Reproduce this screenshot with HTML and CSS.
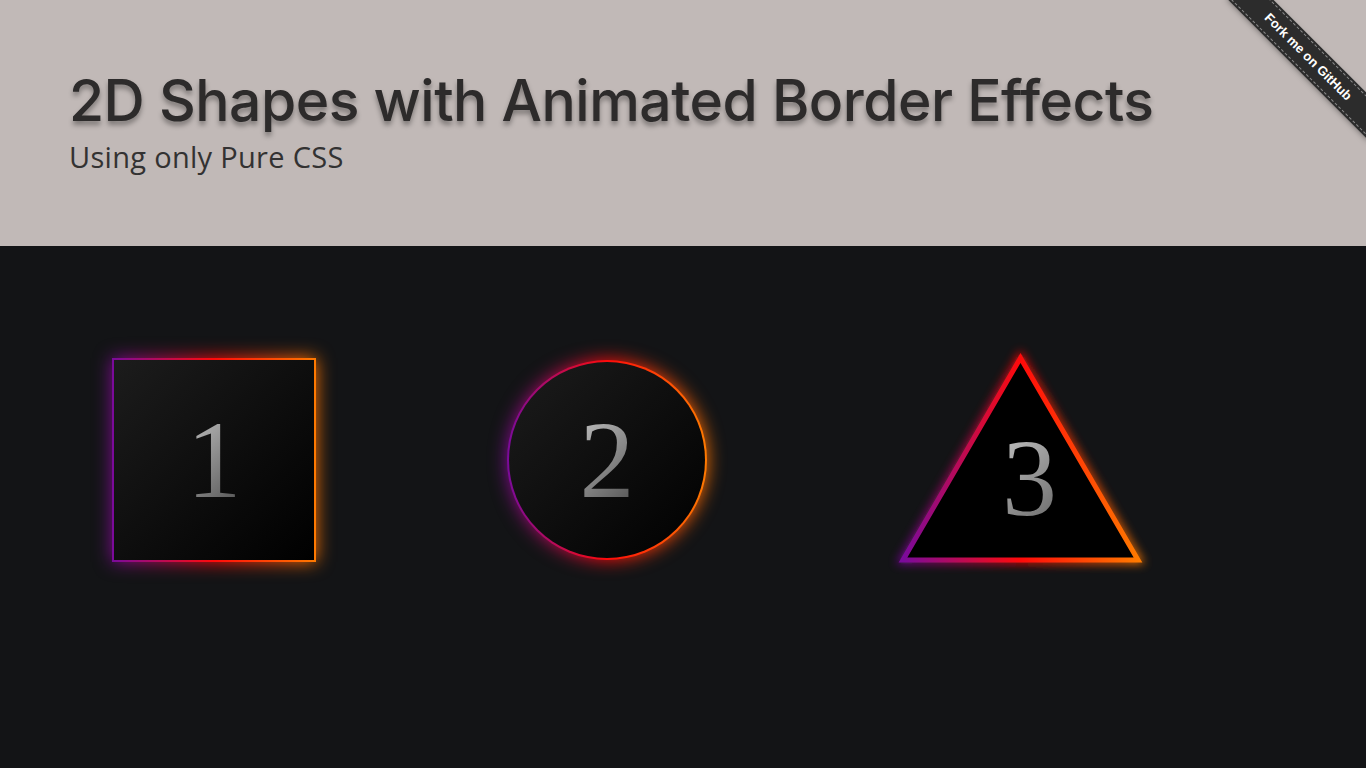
FILE: index.html
```html
<!DOCTYPE html>
<html>
<head>
<meta charset="utf-8">
<link rel="stylesheet" href="styles.css">
</head>
<body>
<header class="hero">
  <h1 class="title">2D Shapes with Animated Border Effects</h1>
  <p class="subtitle">Using only Pure CSS</p>
  <div class="ribbon"><a class="ribbon-link" href="#">Fork me on GitHub</a></div>
</header>
<main class="stage">
  <div class="shape square">
    <div class="glow"></div>
    <div class="face"><span class="num">1</span></div>
  </div>
  <div class="shape circle">
    <div class="glow"></div>
    <div class="face"><span class="num">2</span></div>
  </div>
  <div class="shape triangle">
    <svg class="tri-svg" width="270" height="235" viewBox="0 0 270 235">
      <defs>
        <linearGradient id="tg" x1="0" y1="0" x2="1" y2="0">
          <stop offset="0" stop-color="#7a0a9c"/>
          <stop offset="0.5" stop-color="#ff0a0a"/>
          <stop offset="1" stop-color="#ff7a00"/>
        </linearGradient>
        <filter id="blur" x="-20%" y="-20%" width="140%" height="140%">
          <feGaussianBlur stdDeviation="5"/>
        </filter>
      </defs>
      <polygon points="135.5,18 18,220 253,220" fill="none" stroke="url(#tg)" stroke-width="8" filter="url(#blur)" opacity="0.85"/>
      <polygon points="135.5,18 18,220 253,220" fill="#000" stroke="url(#tg)" stroke-width="5" stroke-linejoin="miter"/>
    </svg>
    <span class="num tri-num">3</span>
  </div>
</main>
</body>
</html>
```
FILE: styles.css
```css
html, body {
  margin: 0;
  padding: 0;
}
body {
  background: #131416;
  height: 768px;
  overflow: hidden;
}
.hero {
  position: relative;
  height: 246px;
  background: #c1b9b7;
  padding: 68px 0 0 69px;
  box-sizing: border-box;
}
.title {
  margin: 0;
  font-family: "Inter", "DejaVu Sans", sans-serif;
  font-weight: 500;
  font-size: 57px;
  line-height: 66px;
  letter-spacing: -0.5px;
  color: #2d2b2b;
  text-shadow: 0 4px 5px rgba(0, 0, 0, 0.35);
}
.subtitle {
  margin: 6px 0 0 0;
  font-family: "Open Sans", "DejaVu Sans", sans-serif;
  font-size: 29px;
  line-height: 34px;
  letter-spacing: 0.3px;
  color: #333232;
}
.ribbon {
  position: absolute;
  top: 0;
  right: 0;
  width: 150px;
  height: 150px;
  overflow: hidden;
}
.ribbon-link {
  position: absolute;
  left: -8px;
  top: 43px;
  width: 200px;
  height: 28px;
  line-height: 22px;
  box-sizing: border-box;
  padding: 2px 0;
  background: #2c2c2c;
  border-top: 1px dashed rgba(255,255,255,0.45);
  border-bottom: 1px dashed rgba(255,255,255,0.45);
  box-shadow: 0 0 0 2px #2c2c2c, 2px 2px 6px rgba(0,0,0,0.5);
  color: #fff;
  text-align: center;
  text-decoration: none;
  font-family: "Liberation Sans", Arial, sans-serif;
  font-weight: bold;
  font-size: 13px;
  transform: rotate(45deg);
}
.stage {
  display: flex;
  align-items: flex-start;
  padding: 112px 0 0 112px;
}
.shape {
  position: relative;
  width: 204px;
  height: 204px;
  flex: none;
}
.glow {
  position: absolute;
  inset: 0;
  background: linear-gradient(90deg, #7a0a9c 0%, #ff0a0a 50%, #ff7a00 100%);
  filter: blur(9px);
  opacity: 1;
}
.face {
  position: relative;
  box-sizing: border-box;
  width: 100%;
  height: 100%;
  background: linear-gradient(90deg, #7a0a9c 0%, #ff0a0a 50%, #ff7a00 100%);
  display: flex;
}
.face::before {
  content: "";
  position: absolute;
  inset: 2px;
  background: linear-gradient(135deg, #1c1c1c 0%, #000 100%);
}
.circle {
  width: 200px;
  height: 200px;
  margin-left: 191px;
  margin-top: 2px;
}
.circle .glow,
.circle .face,
.circle .face::before {
  border-radius: 50%;
}
.num {
  position: relative;
  margin: auto;
  font-family: "Liberation Serif", "Times New Roman", serif;
  font-size: 110px;
  line-height: 1;
  background: linear-gradient(135deg, #c8c8c8 0%, #4a4a4a 100%);
  -webkit-background-clip: text;
  background-clip: text;
  color: transparent;
}
.triangle {
  width: 270px;
  height: 235px;
  margin-left: 178px;
  margin-top: -18px;
  display: flex;
}
.tri-svg {
  position: absolute;
  left: 0;
  top: 0;
}
.tri-num {
  margin: 83px 0 0 117px;
}
```
